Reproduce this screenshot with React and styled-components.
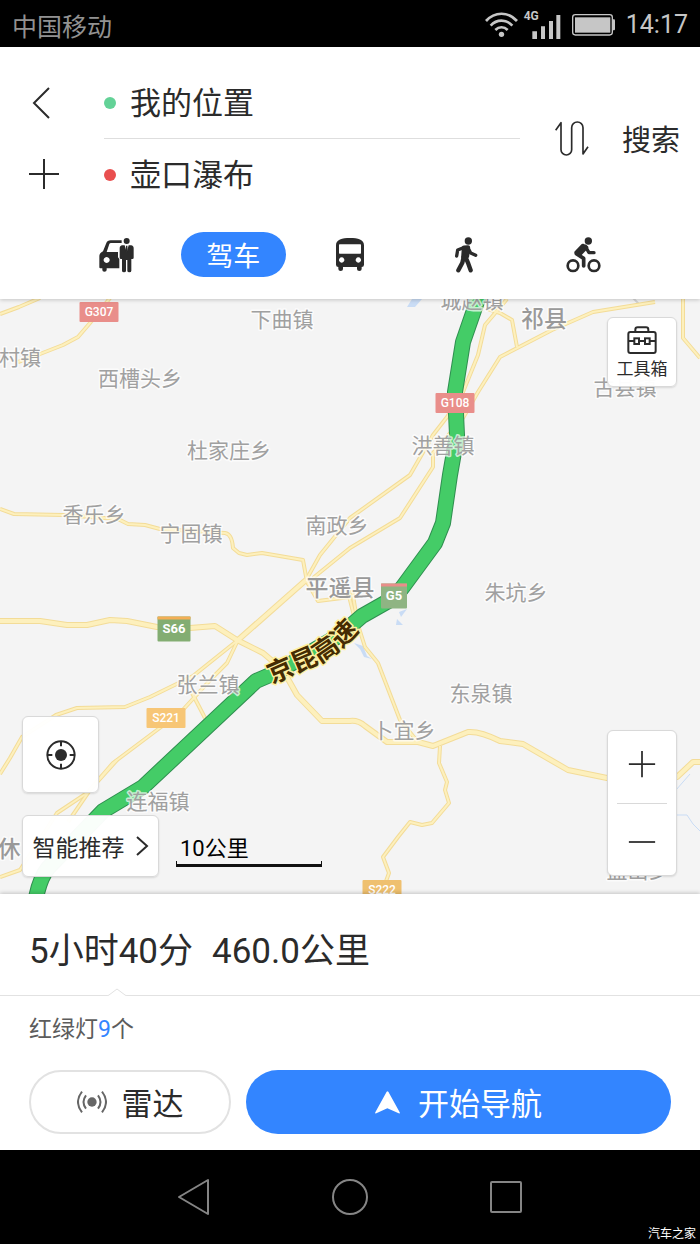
import React, { useState } from "react";
import styled, { createGlobalStyle } from "styled-components";

const GlobalStyle = createGlobalStyle`
  *, *::before, *::after { box-sizing: border-box; }
  body {
    margin: 0;
    background: #000;
    color: #2b2b2b;
    font-family: Roboto, "Noto Sans CJK SC", sans-serif;
  }
  button, input { font: inherit; color: inherit; }
  svg { display: block; flex: none; }
`;

const Screen = styled.div`
  display: flex;
  flex-direction: column;
  min-height: 100vh;
`;

const StatusBar = styled.div`
  display: flex;
  align-items: center;
  justify-content: space-between;
  height: 47px;
  padding: 2px 12px 0;
  background: #000;
  color: #c6c6c6;
  font-size: 25px;
`;

const Carrier = styled.span`
  color: #929292;
`;

const StatusIcons = styled.div`
  display: flex;
  align-items: center;
  gap: 11px;
`;

const Signal = styled.span`
  display: flex;
  align-items: flex-start;
  height: 30px;
  margin-left: -5px;
  font-size: 12px;
  font-weight: 700;
  line-height: 12px;
`;

const SignalBars = styled.svg`
  margin: 5px 0 0 -7px;
`;

const Header = styled.header`
  position: relative;
  z-index: 1;
  padding-top: 20px;
  background: #fff;
  box-shadow: 0 1px 4px rgba(0, 0, 0, 0.2);
`;

const Planner = styled.form`
  display: flex;
  align-items: stretch;
  padding: 0 20px;
`;

const SideActions = styled.div`
  display: flex;
  flex-direction: column;
  width: 84px;
`;

const IconButton = styled.button`
  display: flex;
  align-items: center;
  justify-content: ${(p) => p.$justify || "center"};
  flex: ${(p) => p.$grow || "none"};
  padding: 0 8px;
  border: 0;
  background: none;
  cursor: pointer;
`;

const Stops = styled.div`
  flex: 1;
  min-width: 0;
`;

const Stop = styled.label`
  display: flex;
  align-items: center;
  gap: 14px;
  height: ${(p) => (p.$last ? 71 : 72)}px;
  border-bottom: ${(p) => (p.$last ? "0" : "1px solid #dedede")};

  &::before {
    content: "";
    width: 12px;
    height: 12px;
    border-radius: 50%;
    background: ${(p) => p.$dot};
  }
`;

const StopInput = styled.input`
  flex: 1;
  min-width: 0;
  padding: 2px 0 0;
  border: 0;
  outline: 0;
  background: none;
  font-size: 31px;
  line-height: 44px;
`;

const SearchActions = styled.div`
  display: flex;
  align-items: center;
  justify-content: flex-end;
  width: 160px;
`;

const SearchButton = styled.button`
  margin-left: 25px;
  padding: 4px 0 0;
  border: 0;
  background: none;
  font-size: 29px;
  line-height: 44px;
  cursor: pointer;
`;

const Modes = styled.nav`
  display: flex;
  padding: 22px 58px;
`;

const ModeSlot = styled.div`
  display: flex;
  flex: 1;
  justify-content: center;
`;

const ModeButton = styled.button`
  display: flex;
  align-items: center;
  justify-content: center;
  width: 105px;
  height: 45px;
  padding: 0;
  border: 0;
  border-radius: 23px;
  background: ${(p) => (p.$active ? "#3385ff" : "none")};
  color: ${(p) => (p.$active ? "#fff" : "#2b2b2b")};
  font-size: 27px;
  line-height: 40px;
  cursor: pointer;
`;

const Caption = styled.span`
  padding-top: 5px;
`;

const MapArea = styled.main`
  position: relative;
  flex: 1;
  min-height: 480px;
  overflow: hidden;
  background: #f4f4f4;
`;

const MapCanvas = styled.svg`
  position: absolute;
  inset: 0;
  width: 100%;
  height: 100%;
`;

const MapLabel = styled.text`
  font-family: Roboto, "Noto Sans CJK SC", sans-serif;
  font-size: ${(p) => (p.$major ? 23 : 21)}px;
  font-weight: ${(p) => (p.$major ? 500 : 400)};
  fill: ${(p) => (p.$major ? "#999" : "#a0a0a0")};
  stroke: rgba(255, 255, 255, 0.7);
  stroke-width: 3px;
  stroke-linejoin: round;
  paint-order: stroke;
  text-anchor: middle;
`;

const ShieldText = styled.text`
  font-family: Roboto, sans-serif;
  font-size: ${(p) => (p.$expressway ? 13 : 12)}px;
  font-weight: ${(p) => (p.$expressway ? 700 : 500)};
  fill: #fff;
  text-anchor: middle;
`;

const RouteName = styled.text`
  font-family: "Noto Sans CJK SC", sans-serif;
  font-size: 26px;
  font-weight: 700;
  fill: #452c02;
  stroke: #fff0a0;
  stroke-width: 3px;
  stroke-linejoin: round;
  paint-order: stroke;
  text-anchor: middle;
`;

const LeftTools = styled.div`
  position: absolute;
  left: 22px;
  bottom: 17px;
  display: flex;
  flex-direction: column;
  align-items: flex-start;
  gap: 22px;
`;

const RightTools = styled.div`
  position: absolute;
  top: 18px;
  right: 23px;
  bottom: 18px;
  display: flex;
  flex-direction: column;
  justify-content: space-between;
`;

const Row = styled.div`
  display: flex;
  align-items: flex-end;
  gap: 17px;
`;

const MapButton = styled.button`
  display: flex;
  flex-direction: ${(p) => (p.$stacked ? "column" : "row")};
  align-items: center;
  justify-content: center;
  gap: ${(p) => p.$gap || 0}px;
  width: ${(p) => p.$width}px;
  height: ${(p) => p.$height}px;
  padding: 0;
  border: 1px solid #d9d9d9;
  border-radius: 6px;
  background: rgba(255, 255, 255, 0.97);
  box-shadow: 0 1px 2px rgba(0, 0, 0, 0.12);
  font-size: ${(p) => p.$size || 17}px;
  line-height: ${(p) => (p.$size || 17) + 3}px;
  white-space: nowrap;
  cursor: pointer;
`;

const ZoomPanel = styled.div`
  display: flex;
  flex-direction: column;
  width: 70px;
  height: 146px;
  padding: 0 9px;
  border: 1px solid #d9d9d9;
  border-radius: 6px;
  background: #fff;
  box-shadow: 0 1px 2px rgba(0, 0, 0, 0.12);

  button { padding-bottom: 6px; }
  button + button {
    padding: 6px 8px 0;
    border-top: 1px solid #d9d9d9;
  }
`;

const Scale = styled.div`
  width: 146px;
  height: 34px;
  margin-bottom: 10px;
  padding-left: 4px;
  color: #000;
  font-size: 22px;
  line-height: 32px;
  background:
    linear-gradient(#111, #111) 0 100% / 100% 3px no-repeat,
    linear-gradient(#111, #111) 0 100% / 1px 6px no-repeat,
    linear-gradient(#111, #111) 100% 100% / 1px 6px no-repeat;
`;

const Panel = styled.section`
  position: relative;
  background: #fff;
  box-shadow: 0 -1px 4px rgba(0, 0, 0, 0.2);
`;

const Summary = styled.h1`
  position: relative;
  display: flex;
  gap: 19px;
  margin: 0;
  padding: 32px 29px 17px;
  border-bottom: 1px solid #e2e2e2;
  font-size: 35px;
  font-weight: 400;
  line-height: 52px;
`;

const Notch = styled.svg`
  position: absolute;
  left: 107px;
  bottom: -1px;
`;

const Lights = styled.p`
  margin: 0;
  padding: 17px 29px 23px;
  color: #5c5c5c;
  font-size: 23px;
  line-height: 34px;
`;

const Count = styled.span`
  color: #3385ff;
`;

const Actions = styled.div`
  display: flex;
  gap: 15px;
  padding: 0 29px 16px;
`;

const ActionButton = styled.button`
  display: flex;
  align-items: center;
  justify-content: center;
  gap: ${(p) => (p.$primary ? 18 : 15)}px;
  flex: ${(p) => (p.$primary ? "1" : "0 0 202px")};
  height: 64px;
  padding: 0;
  border: ${(p) => (p.$primary ? "0" : "2px solid #e2e2e2")};
  border-radius: 32px;
  background: ${(p) => (p.$primary ? "#3385ff" : "#fff")};
  color: ${(p) => (p.$primary ? "#fff" : "#2b2b2b")};
  font-size: 31px;
  line-height: 44px;
  cursor: pointer;
`;

const SystemNav = styled.nav`
  position: relative;
  display: flex;
  align-items: center;
  justify-content: center;
  gap: 104px;
  height: 94px;
  background: #000;
`;

const Watermark = styled.small`
  position: absolute;
  right: 4px;
  bottom: 1px;
  color: #fff;
  font-size: 12px;
  line-height: 18px;
`;

const WifiIcon = () => (
  <svg width="33" height="26" viewBox="0 0 99 78" fill="none" stroke="#c6c6c6" strokeWidth="8">
    <path d="M3 27C29-2 70-2 96 27M17 41C35 21 64 21 82 41M31 54C42 43 57 43 68 54" />
    <circle cx="49.500" cy="67" r="8" fill="#c6c6c6" stroke="none" />
  </svg>
);

const BatteryIcon = () => (
  <svg width="43" height="22" viewBox="0 0 129 66">
    <rect x="2" y="2" width="119" height="61" rx="8" fill="none" stroke="#c6c6c6" strokeWidth="4" />
    <rect x="9" y="10" width="106" height="46" fill="#c6c6c6" />
    <path d="M123 16h3q3 0 3 4v25q0 4-3 4h-3z" fill="#c6c6c6" />
  </svg>
);

const PlusIcon = ({ size, minus }) => (
  <svg width={size} height={size} viewBox="0 0 32 32" fill="none" stroke="#2b2b2b" strokeWidth="2">
    <path d={minus ? "M1 16H31" : "M1 16H31M16 1V31"} />
  </svg>
);

const TaxiIcon = () => (
  <svg width="35" height="36" viewBox="0 0 105 108" fill="#2b2b2b">
    <path
      fillRule="evenodd"
      d="M68 10H35Q25 10 22 18L12 43Q1 48 1 58V91Q1 94 4 94H10V99Q10 104 16 104Q23 104 23 99V94H61V66L57 61V45H23L31 21Q32 18 36 18H68ZM23 60A9 9 0 1 1 22.900 60Z"
    />
    <circle cx="83" cy="12" r="9" />
    <path d="M70 25H77L83 46L89 25H96Q104 26 104 34V62Q104 66 100 66H97V101Q97 106 91 106T85 101V69H81V101Q81 106 75 106T69 101V66H66Q62 66 62 62V34Q62 26 70 25Z" />
    <path d="M81 26H85L86 42L83 48L80 42Z" />
  </svg>
);

const BusIcon = () => (
  <svg width="28" height="33" viewBox="0 0 84 99" fill="#2b2b2b">
    <path
      fillRule="evenodd"
      d="M0 22C0 4 18 0 42 0S84 4 84 22V80Q84 87 77 87V93Q77 99 70 99T63 93V87H21V93Q21 99 14 99T7 93V87Q0 87 0 80ZM11 19Q9 19 9 21V45Q9 47 11 47H73Q75 47 75 45V21Q75 19 73 19ZM17 58A8 8 0 1 0 17.100 58ZM67 58A8 8 0 1 0 67.100 58Z"
    />
  </svg>
);

const WalkIcon = () => (
  <svg width="23" height="36" viewBox="0 0 69 108" fill="none" stroke="#2b2b2b" strokeLinecap="round" strokeLinejoin="round">
    <circle cx="40" cy="12" r="11" fill="#2b2b2b" stroke="none" />
    <path d="M25 32L8 39L5 57M39 32L47 48L62 55" strokeWidth="10" />
    <path d="M27 32L39 31L36 58L25 60Z" fill="#2b2b2b" strokeWidth="13" />
    <path d="M26 60L22 77L10 100M32 61L40 80L47 100" strokeWidth="13" />
  </svg>
);

const BikeIcon = () => (
  <svg width="35" height="36" viewBox="0 0 105 108" fill="none" stroke="#2b2b2b" strokeLinecap="round" strokeLinejoin="round">
    <circle cx="67" cy="12" r="11" fill="#2b2b2b" stroke="none" />
    <circle cx="21" cy="86" r="16" strokeWidth="8" />
    <circle cx="84" cy="86" r="16" strokeWidth="8" />
    <path d="M50 25L30 46L42 52L62 31Z" fill="#2b2b2b" strokeWidth="10" />
    <path d="M58 28L69 47H84" strokeWidth="10" />
    <path d="M31 50L53 64V87" strokeWidth="11" />
  </svg>
);

const SwapIcon = () => (
  <svg width="34" height="35" viewBox="0 0 102 105" fill="none" stroke="#2b2b2b" strokeWidth="5" strokeLinejoin="round">
    <path d="M2 28L18 5V86A16 16 0 0 0 50 86V20A17 17 0 0 1 84 20V99L99 77" />
  </svg>
);

const ToolboxIcon = () => (
  <svg width="30" height="28" viewBox="0 0 90 84" fill="none" stroke="#2b2b2b" strokeWidth="6">
    <rect x="4" y="18" width="82" height="63" rx="6" />
    <path d="M25 18V11Q25 4 32 4H57Q64 4 64 11V18M4 45H22M36 45H54M68 45H86" />
    <rect x="22" y="37" width="14" height="17" />
    <rect x="54" y="37" width="14" height="17" />
  </svg>
);

const LocateIcon = () => (
  <svg width="30" height="30" viewBox="0 0 90 90" fill="none" stroke="#2b2b2b" strokeWidth="6">
    <circle cx="45" cy="45" r="41" />
    <circle cx="45" cy="45" r="18" fill="#2b2b2b" stroke="none" />
    <path d="M45 4V19M45 71V86M4 45H19M71 45H86" />
  </svg>
);

const RadarIcon = () => (
  <svg width="30" height="22" viewBox="0 0 90 66" fill="none" stroke="#666" strokeWidth="6">
    <circle cx="45" cy="33" r="14" fill="#666" stroke="none" />
    <path d="M15 2Q-9 33 15 64M27 13Q12 33 27 53M75 2Q99 33 75 64M63 13Q78 33 63 53" />
  </svg>
);

const ArrowIcon = () => (
  <svg width="25" height="23" viewBox="0 0 75 69" fill="#fff">
    <path d="M35 2Q37-1 40 2L74 64Q76 69 71 67L37 52L4 67Q-1 69 1 64Z" />
  </svg>
);

const minorRoads = [
  "M0 314L19 307L40 298",
  "M110 298L90 323L78 337L63 345L40 354L18 362",
  "M0 509L14 514L63 515L118 519L128 524L145 525L160 529L225 533Q232 534 233 548L239 553L247 555L262 553L303 560L307 582L318 601L350 597",
  "M507 299L485 325L478 355L463 392L447 417L433 435L410 475L350 518L320 555L306 580",
  "M655 302L593 312L552 330L500 357L478 392L463 418L433 453V467L400 518L350 548L313 578",
  "M488 309L500 313L512 320L517 347",
  "M683 298V338L700 358",
  "M238 640L193 676L150 697L125 707L77 708L56 715L22 737L10 758L0 774",
  "M238 640L227 663L213 677L180 713L157 730L113 763L87 793L57 813L20 870L0 877",
  "M117 760L90 790L68 822",
  "M192 693L205 718",
  "M348 592L355 620",
  "M352 590L358 625L365 647L378 663L400 720L417 741",
  "M440 746L439 763L447 782L445 790L449 803L432 823L422 825L410 822L398 837L383 857L389 873L385 884",
];

const majorRoads = [
  "M306 580L238 640",
  "M0 621H40L67 625H87L110 620L127 621L157 627L190 628L215 626L237 640L263 653L283 670L297 695L322 721H350Q358 720 365 726L387 742H418L433 746L468 732Q480 731 500 741L523 744L568 770L607 778L677 777L693 762H700",
];

const route =
  "M481 290L463 342L455 392L457 435L450 475L443 523L435 543L402 588L392 599L362 616L340 635L277 672L256 681L143 787L103 811L48 868Q40 878 36 898";

const places = [
  { name: "城赵镇", x: 472, y: 301 },
  { name: "下曲镇", x: 282, y: 320 },
  { name: "祁县", x: 544, y: 320, major: true },
  { name: "村镇", x: 20, y: 358 },
  { name: "西槽头乡", x: 140, y: 379 },
  { name: "古县镇", x: 625, y: 388 },
  { name: "洪善镇", x: 443, y: 446 },
  { name: "杜家庄乡", x: 229, y: 451 },
  { name: "香乐乡", x: 94, y: 515 },
  { name: "南政乡", x: 337, y: 526 },
  { name: "宁固镇", x: 191, y: 534 },
  { name: "平遥县", x: 340, y: 589, major: true },
  { name: "朱坑乡", x: 516, y: 593 },
  { name: "张兰镇", x: 208, y: 685 },
  { name: "东泉镇", x: 481, y: 694 },
  { name: "卜宜乡", x: 404, y: 731 },
  { name: "连福镇", x: 158, y: 802 },
  { name: "休", x: 9, y: 850, major: true },
  { name: "孟山乡", x: 638, y: 871 },
];

const shields = [
  { name: "G307", x: 99, y: 312, w: 39, h: 20, fill: "#e98e8a" },
  { name: "G108", x: 455, y: 403, w: 39, h: 20, fill: "#e98e8a" },
  { name: "G5", x: 394, y: 596, w: 26, h: 25, fill: "#8fb483", cap: "#e98e8a" },
  { name: "S66", x: 174, y: 629, w: 33, h: 25, fill: "#83ad72", cap: "#f3ae55" },
  { name: "S221", x: 166, y: 718, w: 39, h: 20, fill: "#f7c676" },
  { name: "S222", x: 382, y: 890, w: 39, h: 20, fill: "#efc06f" },
];

function RouteMap() {
  return (
    <MapCanvas viewBox="0 299 700 595" preserveAspectRatio="xMidYMid slice" role="img" aria-label="路线地图">
      <g fill="#c9dcf5">
        <path d="M412 299H422L415 307H407Z" />
        <path d="M399 612L407 609L401 617ZM397 619L403 625H396Z" />
        <path d="M354 643L363 646L367 656L372 659L364 657L360 649Z" />
      </g>
      <path d="M677 815H687L693 824L700 831M676 790L690 774" fill="none" stroke="#c9dcf5" />
      <path d="M633 298L640 305" fill="none" stroke="#d4d4d4" strokeWidth="2" />
      <g fill="none" strokeLinejoin="round">
        {minorRoads.map((d) => <path key={d} d={d} stroke="#f3dc98" strokeWidth="4" />)}
        {majorRoads.map((d) => <path key={d} d={d} stroke="#f3dc98" strokeWidth="6" />)}
        {minorRoads.map((d) => <path key={d} d={d} stroke="#fdf0bd" strokeWidth="2" />)}
        {majorRoads.map((d) => <path key={d} d={d} stroke="#fdf0bd" strokeWidth="4" />)}
        <path d={route} stroke="#2f8f50" strokeWidth="16" />
        <path d={route} stroke="#44cc67" strokeWidth="14" />
      </g>
      {places.map((p) => (
        <MapLabel key={p.name} x={p.x} y={p.y + 7} $major={p.major}>{p.name}</MapLabel>
      ))}
      {shields.map((s) => (
        <g key={s.name}>
          <rect x={s.x - s.w / 2} y={s.y - s.h / 2} width={s.w} height={s.h} rx="1" fill={s.fill} />
          {s.cap && <rect x={s.x - s.w / 2} y={s.y - s.h / 2} width={s.w} height="3" fill={s.cap} />}
          <ShieldText x={s.x} y={s.y + 4} $expressway={Boolean(s.cap)}>{s.name}</ShieldText>
        </g>
      ))}
      <path id="route-name-line" d="M267 686L318 664Q342 652 363 626" fill="none" />
      <RouteName>
        <textPath href="#route-name-line" startOffset="50%">京昆高速</textPath>
      </RouteName>
    </MapCanvas>
  );
}

const modes = [
  { name: "打车", Icon: TaxiIcon },
  { name: "驾车" },
  { name: "公交", Icon: BusIcon },
  { name: "步行", Icon: WalkIcon },
  { name: "骑行", Icon: BikeIcon },
];

export default function App() {
  const [start, setStart] = useState("我的位置");
  const [end, setEnd] = useState("壶口瀑布");

  const swap = () => {
    setStart(end);
    setEnd(start);
  };

  return (
    <Screen>
      <GlobalStyle />
      <StatusBar>
        <Carrier>中国移动</Carrier>
        <StatusIcons>
          <WifiIcon />
          <Signal>
            4G
            <SignalBars width="29" height="24" viewBox="0 0 87 72" fill="#c6c6c6">
              <path d="M1 49h14v23h-14zM27 34h12v38h-12zM51 18h12v54h-12zM73 0h12v72h-12z" />
            </SignalBars>
          </Signal>
          <BatteryIcon />
          <span>14:17</span>
        </StatusIcons>
      </StatusBar>

      <Header>
        <Planner onSubmit={(e) => e.preventDefault()}>
          <SideActions>
            <IconButton type="button" aria-label="返回" $grow="1" $justify="flex-start">
              <svg width="26" height="32" viewBox="0 0 26 32" fill="none" stroke="#2b2b2b" strokeWidth="2">
                <path d="M21 1L6 16L21 31" />
              </svg>
            </IconButton>
            <IconButton type="button" aria-label="添加途经点" $grow="1" $justify="flex-start">
              <PlusIcon size={32} />
            </IconButton>
          </SideActions>
          <Stops>
            <Stop $dot="#63d297">
              <StopInput aria-label="起点" value={start} onChange={(e) => setStart(e.target.value)} />
            </Stop>
            <Stop $dot="#e94f4f" $last>
              <StopInput aria-label="终点" value={end} onChange={(e) => setEnd(e.target.value)} />
            </Stop>
          </Stops>
          <SearchActions>
            <IconButton type="button" aria-label="交换起终点" onClick={swap}>
              <SwapIcon />
            </IconButton>
            <SearchButton type="submit">搜索</SearchButton>
          </SearchActions>
        </Planner>
        <Modes aria-label="出行方式">
          {modes.map(({ name, Icon }) => (
            <ModeSlot key={name}>
              <ModeButton type="button" aria-label={name} $active={!Icon}>
                {Icon ? <Icon /> : <Caption>{name}</Caption>}
              </ModeButton>
            </ModeSlot>
          ))}
        </Modes>
      </Header>

      <MapArea>
        <RouteMap />
        <RightTools>
          <MapButton type="button" $stacked $width={70} $height={70}>
            <ToolboxIcon />
            <Caption>工具箱</Caption>
          </MapButton>
          <ZoomPanel>
            <IconButton type="button" aria-label="放大" $grow="1"><PlusIcon size={28} /></IconButton>
            <IconButton type="button" aria-label="缩小" $grow="1"><PlusIcon size={28} minus /></IconButton>
          </ZoomPanel>
        </RightTools>
        <LeftTools>
          <MapButton type="button" aria-label="定位" $width={77} $height={77}>
            <LocateIcon />
          </MapButton>
          <Row>
            <MapButton type="button" $width={137} $height={62} $size={23} $gap={11}>
              <Caption>智能推荐</Caption>
              <svg width="13" height="20" viewBox="0 0 13 20" fill="none" stroke="#2b2b2b" strokeWidth="2">
                <path d="M1 1L11 10L1 19" />
              </svg>
            </MapButton>
            <Scale>10公里</Scale>
          </Row>
        </LeftTools>
      </MapArea>

      <Panel>
        <Summary>
          <span>5小时40分</span>
          <span>460.0公里</span>
          <Notch width="20" height="8" viewBox="0 0 20 8" fill="#fff" stroke="#e2e2e2">
            <path d="M0 8L2 7L10 1L18 7L20 8" />
          </Notch>
        </Summary>
        <Lights>红绿灯<Count>9</Count>个</Lights>
        <Actions>
          <ActionButton type="button"><RadarIcon /><Caption>雷达</Caption></ActionButton>
          <ActionButton type="button" $primary><ArrowIcon /><Caption>开始导航</Caption></ActionButton>
        </Actions>
      </Panel>

      <SystemNav aria-label="系统导航">
        <IconButton type="button" aria-label="后退">
          <svg width="36" height="38" viewBox="0 0 36 38" fill="none" stroke="#858585" strokeWidth="2" strokeLinejoin="round">
            <path d="M3 19L32 2V36Z" />
          </svg>
        </IconButton>
        <IconButton type="button" aria-label="主屏幕">
          <svg width="36" height="38" viewBox="0 0 36 38" fill="none" stroke="#858585" strokeWidth="2">
            <circle cx="18" cy="19" r="17" />
          </svg>
        </IconButton>
        <IconButton type="button" aria-label="最近任务">
          <svg width="36" height="38" viewBox="0 0 36 38" fill="none" stroke="#858585" strokeWidth="2">
            <rect x="3" y="4" width="30" height="30" rx="1" />
          </svg>
        </IconButton>
        <Watermark>汽车之家</Watermark>
      </SystemNav>
    </Screen>
  );
}
